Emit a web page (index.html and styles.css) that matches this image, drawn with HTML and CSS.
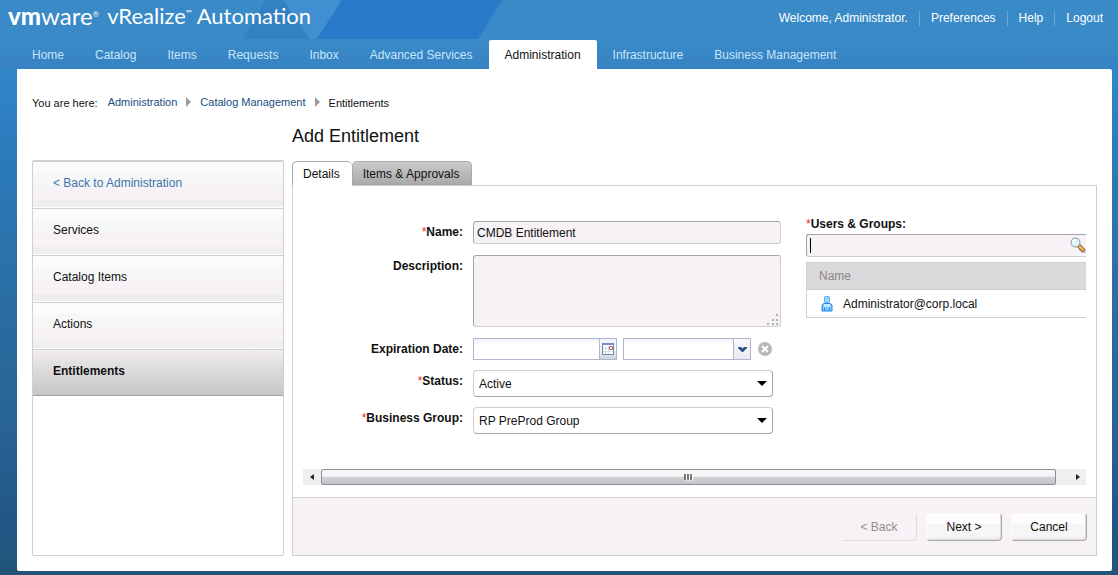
FILE: index.html
```html
<!DOCTYPE html>
<html lang="en">
<head>
<meta charset="utf-8">
<title>vRealize Automation - Add Entitlement</title>
<link rel="stylesheet" href="styles.css">
</head>
<body>
<header class="top">
  <svg class="top-art" width="520" height="39" viewBox="0 0 520 39" aria-hidden="true">
    <path fill="#3380c2" d="M266 0h18l26 39h-67z"/>
    <path fill="#418fd0" d="M283 0h59l-25 39h-7z"/>
    <path fill="#2879c8" d="M342 0h160l-24 39H317z"/>
  </svg>
  <div class="brand"><span class="logo"><b>vm</b>ware<sup>®</sup></span><span class="product">vRealize<sup>™</sup> Automation</span></div>
  <div class="user-links">
    <span>Welcome, Administrator.</span>
    <a href="#">Preferences</a>
    <a href="#">Help</a>
    <a href="#">Logout</a>
  </div>
</header>
<nav class="nav">
  <a href="#">Home</a>
  <a href="#">Catalog</a>
  <a href="#">Items</a>
  <a href="#">Requests</a>
  <a href="#">Inbox</a>
  <a href="#">Advanced Services</a>
  <a href="#" class="active">Administration</a>
  <a href="#">Infrastructure</a>
  <a href="#">Business Management</a>
</nav>
<div class="page">
  <div class="crumbs">
    <span class="crumbs-label">You are here:</span>
    <a href="#">Administration</a>
    <i class="crumb-arrow"></i>
    <a href="#">Catalog Management</a>
    <i class="crumb-arrow"></i>
    <span>Entitlements</span>
  </div>
  <div class="columns">
    <aside class="side">
      <a href="#" class="back">&lt; Back to Administration</a>
      <a href="#">Services</a>
      <a href="#">Catalog Items</a>
      <a href="#">Actions</a>
      <a href="#" class="current">Entitlements</a>
    </aside>
    <main class="main">
      <h1>Add Entitlement</h1>
      <div class="tabs">
        <button type="button" class="tab selected">Details</button>
        <button type="button" class="tab">Items &amp; Approvals</button>
      </div>
      <form class="panel">
        <div class="panel-body">
          <div class="form">
            <div class="fields">
              <label for="name"><em>*</em>Name:</label>
              <input id="name" class="text" type="text" value="CMDB Entitlement">
              <label for="desc">Description:</label>
              <div class="area">
                <textarea id="desc" class="text"></textarea>
                <svg class="grip" width="12" height="12" viewBox="0 0 12 12" fill="#b4b0b4" aria-hidden="true"><path d="M9 0h2v2H9zM5 5h2v2H5zM9 5h2v2H9zM0 9h2v2H0zM5 9h2v2H5zM9 9h2v2H9z"/></svg>
              </div>
              <label for="date">Expiration Date:</label>
              <div class="expiry">
                <div class="combo">
                  <input id="date" type="text">
                  <button type="button" class="cal" aria-label="Pick a date">
                    <svg width="12" height="12" viewBox="0 0 12 12"><path fill="#fff" stroke="#6289b3" d="M.5.5h11v11H.5z"/><path fill="#6c94bf" d="M0 0h12v2H0z"/><path stroke="#ddd" d="M1 5.500h6M1 8.500h10M3.500 3v8M6.500 3v8"/><rect x="7.500" y="3.500" width="3" height="3" rx="1" fill="#fff" stroke="#941a2c"/></svg>
                  </button>
                </div>
                <div class="combo time">
                  <input type="text" aria-label="Expiration time">
                  <button type="button" aria-label="Pick a time">
                    <svg width="9" height="5" viewBox="0 0 9 5"><path fill="#2b4d8e" d="M0 0h3l1.500 1.500L6 0h3v1L5 5H4L0 1z"/></svg>
                  </button>
                </div>
                <button type="button" class="clear" aria-label="Clear">
                  <svg width="14" height="14" viewBox="0 0 14 14"><circle cx="7" cy="7" r="7" fill="#b8b8b8"/><path stroke="#fff" stroke-width="2" d="M4 4l6 6M10 4l-6 6"/></svg>
                </button>
              </div>
              <label for="status"><em>*</em>Status:</label>
              <div class="select">
                <select id="status"><option>Active</option></select>
                <svg width="10" height="5" viewBox="0 0 10 5" aria-hidden="true"><path d="M0 0h10L5 5z"/></svg>
              </div>
              <label for="group"><em>*</em>Business Group:</label>
              <div class="select">
                <select id="group"><option>RP PreProd Group</option></select>
                <svg width="10" height="5" viewBox="0 0 10 5" aria-hidden="true"><path d="M0 0h10L5 5z"/></svg>
              </div>
            </div>
            <div class="users">
              <label for="users"><em>*</em>Users &amp; Groups:</label>
              <div class="search">
                <input id="users" class="text" type="text">
                <i class="caret"></i>
                <svg width="16" height="16" viewBox="0 0 16 16" aria-hidden="true"><path stroke="#c4c0c4" stroke-width="4" d="M10 11l5 5"/><path stroke="#6b4a22" stroke-width="4" d="M8.500 8.500l5.500 5.500"/><path stroke="#f2b850" stroke-width="2.500" d="M9 9l4.500 4.500"/><circle cx="5.500" cy="5.500" r="4.500" fill="#dff4fa" stroke="#7f9aa6"/><path stroke="#fff" stroke-width="1.500" fill="none" d="M3 6c0-2 1-3 3-3"/></svg>
              </div>
              <table>
                <thead><tr><th scope="col">Name</th></tr></thead>
                <tbody><tr><td><div class="person">
                  <svg width="12" height="16" viewBox="0 0 12 16" aria-hidden="true"><rect x="3.500" y=".5" width="5" height="6" rx="1" fill="#9ad8ff" stroke="#5aa9f5"/><path fill="#7cc8ff" stroke="#2c84ec" d="M2.500 7.500h7l1.500 1.500v6H1V9z"/><path fill="#c4ebff" d="M3 8h6v3H3z"/><path stroke="#2c84ec" d="M3.500 11.500v3M8.500 11.500v3"/></svg>
                  Administrator@corp.local</div></td></tr></tbody>
              </table>
            </div>
          </div>
          <div class="scroll">
            <button type="button" aria-label="Scroll left"><svg width="4" height="6" viewBox="0 0 4 6"><path fill="#222" d="M4 0v6L0 3z"/></svg></button>
            <div class="thumb"><svg width="9" height="7" viewBox="0 0 9 7" aria-hidden="true"><path fill="#777" d="M0 0h2v6H0zM3 0h2v6H3zM6 0h2v6H6z"/><path fill="#fff" d="M2 1h1v6H2zM5 1h1v6H5zM8 1h1v6H8z"/></svg></div>
            <button type="button" class="right" aria-label="Scroll right"><svg width="4" height="6" viewBox="0 0 4 6"><path fill="#222" d="M0 0v6l4-3z"/></svg></button>
          </div>
        </div>
        <div class="actions">
          <button type="button" class="btn" disabled>&lt; Back</button>
          <button type="button" class="btn">Next &gt;</button>
          <button type="button" class="btn">Cancel</button>
        </div>
      </form>
    </main>
  </div>
</div>
</body>
</html>
```
FILE: styles.css
```css
* { box-sizing: border-box; }
body {
  margin: 0;
  min-height: 100vh;
  padding-bottom: 4px;
  display: flex;
  flex-direction: column;
  font: 12px/16px "Liberation Sans", Arial, sans-serif;
  color: #111;
  background: linear-gradient(#398ac7 0, #3787c7 60px, #3085c8 80px, #2c7bbd 145px, #2a70a6 280px, #286393 430px, #215787 520px, #225577 575px) #225577;
}
a { color: inherit; text-decoration: none; }
input, select, textarea, button { font: inherit; color: inherit; margin: 0; border-radius: 0; }
button { padding: 0; border: 0; background: none; }
svg { display: block; flex: none; }

.top { position: relative; height: 40px; display: flex; justify-content: space-between; color: #fff; background: #398ac7; }
.top-art { position: absolute; left: 0; top: 0; }
.brand { position: relative; display: flex; gap: 8px; padding-left: 8px; font: 22px/32px Lato, sans-serif; white-space: nowrap; }
.logo { font-size: 24px; }
.logo b { font-weight: 900; }
.brand sup { font-size: 8px; line-height: 8px; vertical-align: 8px; }
.user-links { display: flex; align-items: center; padding: 0 4px 3px 0; }
.user-links > * { padding: 0 11px; line-height: 15px; border-left: 1px solid #6aa8dc; }
.user-links > :first-child { border-left: 0; }

.nav { display: flex; gap: 1px; padding-left: 17px; color: #c7e5fa; background: linear-gradient(#398ac7, #3782c4); }
.nav a { padding: 7px 15px 6px; white-space: nowrap; }
.nav .active { padding: 7px 16px 6px; color: #111; background: #fff; border-radius: 2px 2px 0 0; }

.page { flex: 1; display: flex; flex-direction: column; margin: 0 6px 0 17px; padding: 24px 15px 15px; background: #fff; border-radius: 0 2px 2px 2px; }
.crumbs { display: flex; align-items: center; gap: 9px; font-size: 11px; }
.crumbs a { color: #174f82; }
.crumbs-label { margin-right: 1px; }
.crumb-arrow { border: 5px solid transparent; border-left-color: #9b9b9b; border-right: 0; }
.crumbs span { padding-top: 2px; }

.columns { flex: 1; display: flex; gap: 8px; padding-top: 14px; }
.side { flex: 0 0 252px; margin-top: 35px; border: 1px solid #d1cfd1; border-top-width: 2px; border-radius: 2px; }
.side a { display: block; height: 47px; padding: 13px 20px; border-bottom: 1px solid #d1cfd1; background: linear-gradient(#fdfafe 0 11px, #f6f7f7 11px 23px, #f6f2f6 25px 38px, #eee 38px 45px, #fff 45px); }
.side .back { color: #3d73a9; }
.side .current { height: 46px; font-weight: bold; border-bottom-color: #a09ea0; background: linear-gradient(#f0ecf0, #c6c5c6); }

.main { flex: 1; min-width: 0; display: flex; flex-direction: column; }
h1 { margin: 0 0 14px; font-size: 18px; line-height: 22px; font-weight: normal; }
.tabs { display: flex; position: relative; z-index: 1; margin-bottom: -1px; }
.tab { height: 25px; padding: 0 12px 0 10px; border: 1px solid #aaa; border-bottom-color: #d0ced0; border-radius: 5px 5px 0 0; background: linear-gradient(#cbcbcb, #a8a8a8); }
.tab.selected { background: #fff; border-bottom-color: #fff; border-right: 0; }
.panel { flex: 1; display: flex; flex-direction: column; border: 1px solid #d0ced0; }
.panel-body { flex: 1; display: flex; flex-direction: column; justify-content: space-between; padding: 28px 10px 12px; }
.form { display: flex; gap: 25px; }
.fields { flex: none; display: grid; grid-template-columns: 160px 308px; grid-template-rows: 24px 73px; gap: 10px; padding-top: 7px; }
label { font-weight: bold; line-height: 22px; }
label em { color: #e8262b; font-style: normal; font-weight: normal; }
.fields label { text-align: right; }
.text { display: block; width: 100%; height: 23px; padding: 0 3px; border: 1px solid #d0ced0; border-top-color: #a6a4a6; border-left-color: #a6a4a6; border-radius: 3px; background: #f6f2f6; outline: 0; }
.area { position: relative; }
textarea.text { height: 72px; resize: none; }
.grip { position: absolute; right: 2px; bottom: 2px; }

.expiry { display: flex; align-items: center; gap: 6px; }
.combo { display: flex; width: 144px; height: 22px; border: 1px solid #b3b5d0; }
.combo.time { width: 128px; margin-right: 1px; }
.combo input { flex: 1; min-width: 0; border: 0; padding: 0 4px; background: linear-gradient(#f1f1f8, #fff 6px); }
.combo button { display: flex; align-items: center; justify-content: center; width: 17px; border-left: 1px solid #b3b5d0; background: linear-gradient(#fafafc, #eaeaf0); }
.combo .cal { background: linear-gradient(#f5f5fa 50%, #cfcfd6); }
.select { position: relative; width: 300px; }
.select select { display: block; width: 100%; height: 27px; padding: 0 5px; appearance: none; border: 1px solid #d0ced0; border-right-color: #a6a4a6; border-bottom-color: #a6a4a6; border-radius: 4px; background: #fff; }
.select svg { position: absolute; right: 6px; top: 11px; }

.users { flex: 1; min-width: 0; }
.users label { display: block; line-height: 20px; }
.search { position: relative; margin-bottom: 5px; }
.search .text { border-right: 0; border-radius: 3px 0 0 3px; }
.search svg { position: absolute; right: 0; top: 3px; }
.caret { position: absolute; left: 4px; top: 4px; width: 1px; height: 15px; background: #000; }
table { width: 100%; border-spacing: 0; border: 1px solid #d0ced0; border-right: 0; }
th { height: 27px; padding: 0 12px; text-align: left; font-weight: normal; color: #8a888a; background: #dcd9dc; border-bottom: 1px solid #d0ced0; }
td { height: 27px; padding: 0 14px; }
.person { display: flex; align-items: center; gap: 10px; }

.scroll { display: flex; height: 16px; background: #f1eef1; }
.scroll button { display: flex; align-items: center; justify-content: center; width: 18px; }
.scroll .right { width: 30px; padding-left: 14px; }
.thumb { flex: 1; display: flex; align-items: center; justify-content: center; border: 1px solid #8f8d8f; border-radius: 2px; background: linear-gradient(#f7f5f7 45%, #d2d1d6 50%, #c4c3c9); }

.actions { display: flex; justify-content: flex-end; gap: 9px; padding: 15px 9px 14px; background: #f6f2f6; border-top: 1px solid #d0ced0; }
.btn { width: 76px; height: 28px; border: 1px solid #fdfafe; border-right-color: #a9a7a9; border-bottom-color: #a9a7a9; border-radius: 4px; box-shadow: inset -1px -1px 0 #dddbdd; background: linear-gradient(#fffdff 35%, #f6f6f6 40%, #f7f5f7 85%, #eee); }
.btn:disabled { color: #929092; border-color: #f6f2f6 #dddbdd #dddbdd #f6f2f6; box-shadow: none; background: #f6f2f6; }
```
